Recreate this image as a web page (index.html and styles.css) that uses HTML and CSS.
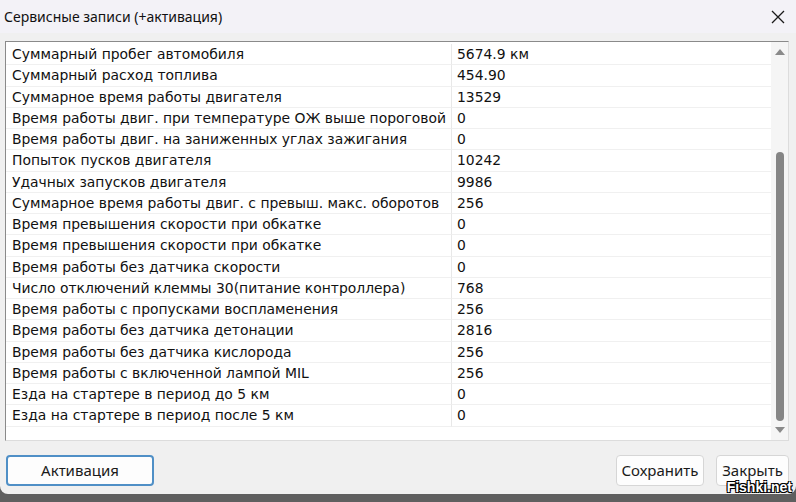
FILE: index.html
```html
<!DOCTYPE html>
<html>
<head>
    <title>Сервисные записи</title>
    <meta charset="utf-8">
    <link rel="stylesheet" href="styles.css">
</head>
<body>
    <div class="window">
        <div class="titlebar">
            <span class="title">Сервисные записи (+активация)</span>
            <svg class="close" width="14" height="14" viewBox="0 0 14 14">
                <path d="M1 1 L13 13 M13 1 L1 13" stroke="#1a1a1a" stroke-width="1.3" fill="none"/>
            </svg>
        </div>

        <div class="content">
            <div class="listbox">
                <div class="rows" id="rows">
                    <!-- rows are filled from the data below -->
                </div>
                <div class="scrollbar">
                    <div class="arrow up"></div>
                    <div class="track"><div class="thumb"></div></div>
                    <div class="arrow down"></div>
                </div>
            </div>

            <div class="buttons">
                <button class="btn btn-accent">Активация</button>
                <div class="spacer"></div>
                <button class="btn btn-save">Сохранить</button>
                <button class="btn btn-close">Закрыть</button>
            </div>
        </div>
        <div class="watermark">Fishki.net</div>
    </div>

    <script>
        // name / value pairs shown in the list
        const records = [
            ["Суммарный пробег автомобиля", "5674.9 км"],
            ["Суммарный расход топлива", "454.90"],
            ["Суммарное время работы двигателя", "13529"],
            ["Время работы двиг. при температуре ОЖ выше пороговой", "0"],
            ["Время работы двиг. на заниженных углах зажигания", "0"],
            ["Попыток пусков двигателя", "10242"],
            ["Удачных запусков двигателя", "9986"],
            ["Суммарное время работы двиг. с превыш. макс. оборотов", "256"],
            ["Время превышения скорости при обкатке", "0"],
            ["Время превышения скорости при обкатке", "0"],
            ["Время работы без датчика скорости", "0"],
            ["Число отключений клеммы 30(питание контроллера)", "768"],
            ["Время работы с пропусками воспламенения", "256"],
            ["Время работы без датчика детонации", "2816"],
            ["Время работы без датчика кислорода", "256"],
            ["Время работы с включенной лампой MIL", "256"],
            ["Езда на стартере в период до 5 км", "0"],
            ["Езда на стартере в период после 5 км", "0"]
        ];

        var rows = document.getElementById('rows');
        records.forEach(function (rec) {
            var name = document.createElement('div');
            name.className = 'cell name';
            name.textContent = rec[0];
            var value = document.createElement('div');
            value.className = 'cell value';
            value.textContent = rec[1];
            rows.appendChild(name);
            rows.appendChild(value);
        });
    </script>
</body>
</html>
```

FILE: styles.css
```css
body {
    margin: 0;
    background-color: #5f5f5f;
    font-family: "Noto Sans", "Open Sans", sans-serif;
    color: #1a1a1a;
}

.window {
    position: relative;
    width: 796px;
    height: 494px;
    background-color: #f0f0f0;
    border-radius: 0 0 8px 8px;
    overflow: hidden;
}

.titlebar {
    height: 33px;
    background-color: #f3f2f7;
    display: flex;
    align-items: center;
    padding: 0 10px 0 4px;
}

.title {
    flex: 1;
    font-size: 14px;
    color: #111;
}

.close {
    margin-right: 1px;
}

.content {
    padding: 8px 7px 0 5px;
}

.listbox {
    height: 398px;
    display: flex;
    background-color: #fff;
    border-top: 1px solid #8a8a8a;
    border-left: 1px solid #8a8a8a;
    border-right: 1px solid #dcdcdc;
    border-bottom: 1px solid #dcdcdc;
}

.rows {
    flex: 1;
    display: grid;
    grid-template-columns: 446px 1fr;
    grid-auto-rows: 21.25px;
    align-content: start;
    padding-top: 2px;
    font-family: "DejaVu Sans", sans-serif;
    font-size: 13.9px;
    color: #111;
}

.cell {
    display: flex;
    align-items: center;
    border-bottom: 1px solid #f0f0f0;
    white-space: nowrap;
    overflow: hidden;
}

.cell.name {
    padding-left: 6px;
    border-right: 1px solid #e8e8e8;
}

.cell.value {
    padding-left: 5px;
}

.scrollbar {
    width: 17px;
    background-color: #f5f5f5;
    display: flex;
    flex-direction: column;
    align-items: center;
}

.arrow {
    width: 0;
    height: 0;
    border-left: 5px solid transparent;
    border-right: 5px solid transparent;
}

.arrow.up {
    margin-top: 7px;
    border-bottom: 6px solid #8a8a8a;
}

.arrow.down {
    margin-bottom: 7px;
    border-top: 6px solid #8a8a8a;
}

.track {
    flex: 1;
    width: 100%;
    display: flex;
    flex-direction: column;
    align-items: center;
    padding-top: 97px;
    padding-bottom: 6px;
}

.thumb {
    flex: 1;
    width: 8px;
    background-color: #858585;
    border-radius: 4px;
}

.buttons {
    display: flex;
    align-items: center;
    margin-top: 14px;
    padding-left: 1px;
}

.spacer {
    flex: 1;
}

.btn {
    height: 31px;
    font-family: "Noto Sans", "Open Sans", sans-serif;
    font-size: 15px;
    line-height: 15px;
    color: #1a1a1a;
    background-color: #fdfdfd;
    border: 1px solid #d6d6d6;
    border-radius: 4px;
    padding: 0;
}

.btn-accent {
    width: 148px;
    border: 2px solid #4f8fc6;
}

.btn-save {
    width: 88px;
}

.btn-close {
    width: 73px;
    margin-left: 12px;
}

/* site watermark over the corner */
.watermark {
    position: absolute;
    right: 4px;
    bottom: 1px;
    line-height: 12px;
    font-family: "Liberation Sans", sans-serif;
    font-weight: bold;
    font-size: 14px;
    color: #fff;
    text-shadow: -1px -1px 0 #000, 1px -1px 0 #000, -1px 1px 0 #000, 1px 1px 0 #000;
}
```
